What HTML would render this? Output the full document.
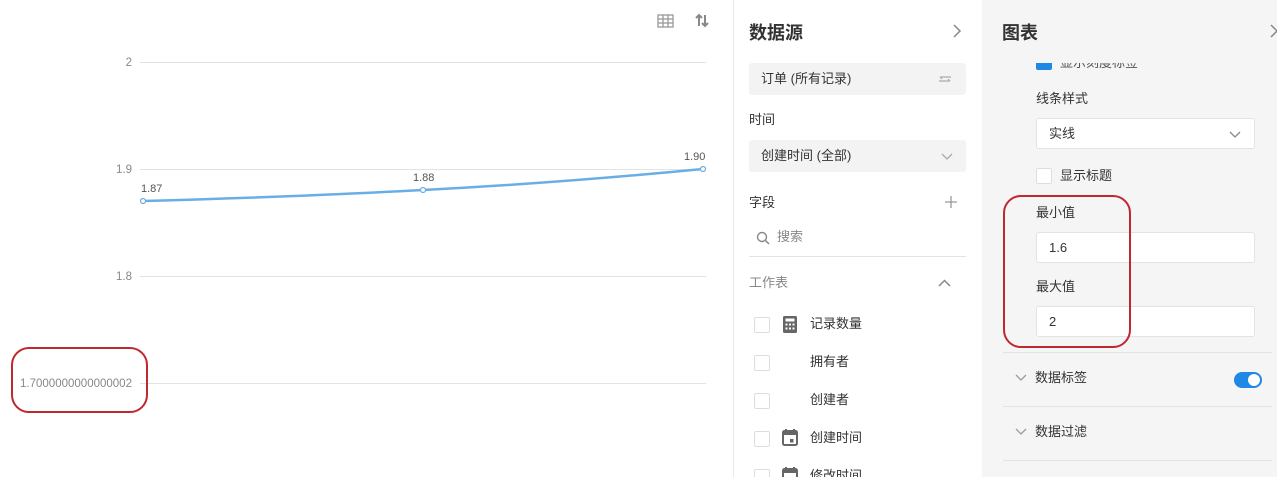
<!DOCTYPE html>
<html><head><meta charset="utf-8"><style>
*{margin:0;padding:0;box-sizing:border-box}
html,body{width:1277px;height:477px;overflow:hidden}
body{background:#fff;font-family:"Liberation Sans","Noto Sans CJK SC",sans-serif;position:relative;color:#333}
.a{position:absolute}
.t{font-size:13px;color:#333;line-height:16px}
.cb{position:absolute;width:16px;height:16px;border:1px solid #ddd;background:#fff;border-radius:2px}
.box{position:absolute;background:#f3f3f3;border-radius:3px;font-size:13px;color:#333;padding-left:12px;line-height:32px}
.inp{position:absolute;left:1036px;width:219px;height:31px;background:#fff;border:1px solid #e3e3e3;border-radius:3px;font-size:13px;padding-left:12px;line-height:29px}
.hr{position:absolute;left:1003px;width:269px;height:1px;background:#e3e3e3}
.red{position:absolute;border:2px solid #c0282f;border-radius:18px}
svg.i{position:absolute;overflow:visible}
</style></head><body>
<div class="a" style="left:733px;top:0;width:1px;height:477px;background:#e8e8e8"></div>
<div class="a" style="left:982px;top:0;width:295px;height:477px;background:#f5f5f5"></div>

<svg class="a" style="left:0;top:0" width="733" height="477">
<g stroke="#e3e3e3" stroke-width="1">
<line x1="140" y1="62.5" x2="706" y2="62.5"/><line x1="140" y1="169.5" x2="706" y2="169.5"/>
<line x1="140" y1="276.5" x2="706" y2="276.5"/><line x1="140" y1="383.5" x2="706" y2="383.5"/></g>
<g font-family="Liberation Sans" font-size="11.5" fill="#888" text-anchor="end">
<text x="132" y="66">2</text><text x="132" y="173">1.9</text><text x="132" y="280">1.8</text><text x="132" y="387" textLength="112" lengthAdjust="spacingAndGlyphs">1.7000000000000002</text></g>
<path d="M143 201 C250 198 350 194 423 190 C520 185 620 177 703 169" fill="none" stroke="#6aaee6" stroke-width="2.5"/>
<g fill="#fff" stroke="#6aaee6" stroke-width="1.2"><circle cx="143" cy="201" r="2.5"/><circle cx="423" cy="190" r="2.5"/><circle cx="703" cy="169" r="2.5"/></g>
<g font-family="Liberation Sans" font-size="11" fill="#555"><text x="141" y="192">1.87</text><text x="413" y="181">1.88</text><text x="684" y="160">1.90</text></g>
<g fill="none" stroke="#999" stroke-width="1.3"><rect x="658" y="15" width="15" height="12"/><line x1="658" y1="19" x2="673" y2="19"/><line x1="658" y1="23" x2="673" y2="23"/><line x1="663" y1="15" x2="663" y2="27"/><line x1="668" y1="15" x2="668" y2="27"/></g>
<g fill="none" stroke="#888" stroke-width="2"><path d="M699 26V15M696 18l3-3 3 3M705 15v11M702 23l3 3 3-3"/></g>
</svg>
<div class="red" style="left:11px;top:347px;width:137px;height:66px"></div>

<div class="a" style="left:749px;top:19px;font-size:18px;font-weight:bold">数据源</div>
<svg class="i" style="left:952px;top:24px" width="10" height="14"><path d="M2 1l6 6-6 6" fill="none" stroke="#888" stroke-width="1.5"/></svg>
<div class="box" style="left:749px;top:63px;width:217px;height:32px">订单 (所有记录)</div>
<svg class="i" style="left:937px;top:73px" width="16" height="12"><path d="M2 8h11M11 6l2 2M14 4H3M5 6L3 4" fill="none" stroke="#aaa" stroke-width="1.2"/></svg>
<div class="a t" style="left:749px;top:112px">时间</div>
<div class="box" style="left:749px;top:140px;width:217px;height:32px">创建时间 (全部)</div>
<svg class="i" style="left:941px;top:153px" width="12" height="8"><path d="M1 1l5 5 5-5" fill="none" stroke="#aaa" stroke-width="1.3"/></svg>
<div class="a t" style="left:749px;top:195px">字段</div>
<svg class="i" style="left:945px;top:196px" width="12" height="12"><path d="M6 0v12M0 6h12" stroke="#999" stroke-width="1.3"/></svg>
<svg class="i" style="left:756px;top:231px" width="14" height="14"><circle cx="6" cy="6" r="4.5" fill="none" stroke="#888" stroke-width="1.4"/><path d="M9.5 9.5l3.5 3.5" stroke="#888" stroke-width="1.5"/></svg>
<div class="a t" style="left:777px;top:229px;color:#888">搜索</div>
<div class="a" style="left:749px;top:256px;width:217px;height:1px;background:#e3e3e3"></div>
<div class="a t" style="left:749px;top:275px;color:#888">工作表</div>
<svg class="i" style="left:938px;top:279px" width="13" height="8"><path d="M1 7l5.5-5.5L12 7" fill="none" stroke="#888" stroke-width="1.5"/></svg>
<div class="cb" style="left:754px;top:317px"></div>
<svg class="i" style="left:783px;top:316px" width="14" height="17"><rect width="14" height="17" rx="1.5" fill="#666"/><rect x="2.5" y="2.5" width="9" height="3" fill="#fff"/><g fill="#fff"><rect x="2.5" y="7.5" width="2" height="2"/><rect x="6" y="7.5" width="2" height="2"/><rect x="9.5" y="7.5" width="2" height="2"/><rect x="2.5" y="11.5" width="2" height="2"/><rect x="6" y="11.5" width="2" height="2"/><rect x="9.5" y="11.5" width="2" height="2"/></g></svg>
<div class="a t" style="left:810px;top:316px">记录数量</div>
<div class="cb" style="left:754px;top:355px"></div><div class="a t" style="left:810px;top:354px">拥有者</div>
<div class="cb" style="left:754px;top:393px"></div><div class="a t" style="left:810px;top:392px">创建者</div>
<div class="cb" style="left:754px;top:431px"></div>
<svg class="i" style="left:782px;top:429px" width="16" height="17"><rect x="1" y="2" width="14" height="14" rx="1.5" fill="none" stroke="#666" stroke-width="2"/><rect x="1" y="2" width="14" height="4" fill="#666"/><path d="M4 0v3M12 0v3" stroke="#666" stroke-width="2"/><rect x="8" y="10" width="3.5" height="3.5" fill="#666"/></svg>
<div class="a t" style="left:810px;top:430px">创建时间</div>
<div class="cb" style="left:754px;top:469px"></div>
<svg class="i" style="left:782px;top:467px" width="16" height="17"><rect x="1" y="2" width="14" height="14" rx="1.5" fill="none" stroke="#666" stroke-width="2"/><rect x="1" y="2" width="14" height="4" fill="#666"/><path d="M4 0v3M12 0v3" stroke="#666" stroke-width="2"/></svg>
<div class="a t" style="left:810px;top:468px">修改时间</div>

<div class="a" style="left:1036px;top:56px;width:16px;height:14px;background:#1e88e5;border-radius:2px"></div>
<div class="a t" style="left:1060px;top:55px;color:#555">显示刻度标签</div>
<div class="a" style="left:1003px;top:0;width:274px;height:63px;background:#f5f5f5"></div>
<div class="a" style="left:1002px;top:19px;font-size:18px;font-weight:bold">图表</div>
<svg class="i" style="left:1269px;top:24px" width="10" height="14"><path d="M2 1l6 6-6 6" fill="none" stroke="#888" stroke-width="1.5"/></svg>
<div class="a t" style="left:1036px;top:91px">线条样式</div>
<div class="inp" style="top:118px">实线</div>
<svg class="i" style="left:1229px;top:131px" width="12" height="8"><path d="M1 1l5 5 5-5" fill="none" stroke="#888" stroke-width="1.3"/></svg>
<div class="cb" style="left:1036px;top:168px"></div><div class="a t" style="left:1060px;top:168px">显示标题</div>
<div class="a t" style="left:1036px;top:205px">最小值</div>
<div class="inp" style="top:232px">1.6</div>
<div class="a t" style="left:1036px;top:279px">最大值</div>
<div class="inp" style="top:306px">2</div>
<div class="red" style="left:1003px;top:195px;width:128px;height:153px"></div>
<div class="hr" style="top:352px"></div>
<svg class="i" style="left:1015px;top:374px" width="12" height="8"><path d="M1 1l5 5 5-5" fill="none" stroke="#999" stroke-width="1.3"/></svg>
<div class="a t" style="left:1035px;top:370px">数据标签</div>
<div class="a" style="left:1234px;top:372px;width:28px;height:16px;background:#1e88e5;border-radius:8px"><div style="position:absolute;right:2px;top:2px;width:12px;height:12px;border-radius:50%;background:#fff"></div></div>
<div class="hr" style="top:406px"></div>
<svg class="i" style="left:1015px;top:428px" width="12" height="8"><path d="M1 1l5 5 5-5" fill="none" stroke="#999" stroke-width="1.3"/></svg>
<div class="a t" style="left:1035px;top:424px">数据过滤</div>
<div class="hr" style="top:460px"></div>
</body></html>
